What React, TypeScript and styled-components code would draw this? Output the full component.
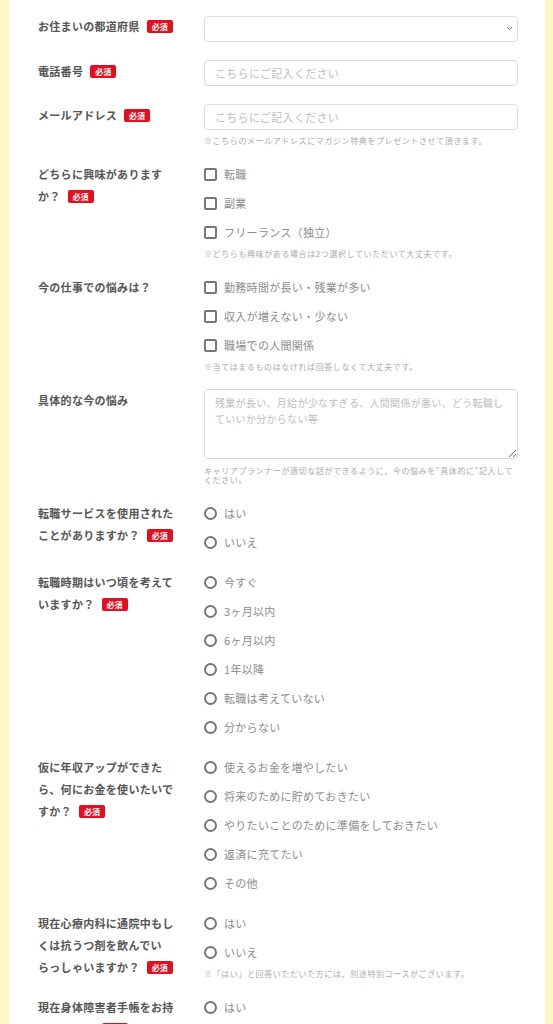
import { createGlobalStyle } from 'styled-components';
import styled from 'styled-components';
import { ChevronDown } from 'lucide-react';

const GlobalStyle = createGlobalStyle`
  html, body {
    margin: 0;
    padding: 0;
    background: #fdf7c6;
  }
  body {
    font-family: "Noto Sans CJK JP", "Noto Sans", sans-serif;
  }
  * {
    box-sizing: border-box;
  }
`;

const Page = styled.div`
  padding: 0 8px 0 9px;
`;

const Form = styled.form`
  background: #fff;
  padding: 15px 27px 40px 29px;
  display: flex;
  flex-direction: column;
  gap: 18px;
`;

const Row = styled.div`
  display: grid;
  grid-template-columns: 166px 1fr;
`;

const Label = styled.div`
  font-size: 11px;
  letter-spacing: 0.3px;
  font-weight: 700;
  color: #555;
  line-height: 22px;
  padding-right: 24px;
  line-break: strict;
`;

const Badge = styled.span`
  display: inline-block;
  margin-left: 7px;
  padding: 0 5px;
  height: 13px;
  line-height: 13px;
  border-radius: 2px;
  background: #e50e1f;
  color: #fff;
  font-size: 8px;
  font-weight: 700;
  letter-spacing: 0;
  vertical-align: 1px;
`;

const Field = styled.div`
  display: flex;
  flex-direction: column;
  min-width: 0;
`;

const baseInput = `
  width: 100%;
  border: 1px solid #dcdcdc;
  border-radius: 4px;
  background: #fff;
  font-family: "Noto Sans CJK JP", "Noto Sans", sans-serif;
  font-size: 11px;
  letter-spacing: 0.3px;
  color: #555;
  outline: none;
  &::placeholder {
    color: #bdbdbd;
  }
`;

const TextInput = styled.input`
  ${baseInput}
  height: 26px;
  padding: 0 10px;
`;

const SelectWrap = styled.div`
  position: relative;
`;

const Select = styled.select`
  ${baseInput}
  appearance: none;
  height: 26px;
  padding: 0 10px;
`;

const Chevron = styled(ChevronDown)`
  position: absolute;
  right: 4px;
  top: 9px;
  color: #666;
  pointer-events: none;
`;

const TextArea = styled.textarea`
  ${baseInput}
  display: block;
  height: 70px;
  margin-bottom: 1px;
  padding: 5px 10px;
  font-size: 10px;
  line-height: 16px;
  resize: vertical;
`;

const Note = styled.p`
  margin: 6px 0 0;
  font-size: 8px;
  letter-spacing: 0.6px;
  line-height: 9px;
  color: #aaa;
`;

const OptionList = styled.div`
  display: flex;
  flex-direction: column;
  gap: 7px;
`;

const Option = styled.label`
  display: flex;
  align-items: center;
  gap: 7px;
  height: 22px;
  font-size: 11px;
  letter-spacing: 0.3px;
  color: #8c8c8c;
`;

const Mark = styled.span<{ $round?: boolean }>`
  flex: none;
  width: 13px;
  height: 13px;
  border: 2px solid #777;
  border-radius: ${(p) => (p.$round ? '50%' : '2px')};
  background: #fff;
`;

type Question = {
  label: string;
  required?: boolean;
  kind: 'select' | 'text' | 'textarea' | 'check' | 'radio';
  options?: string[];
  placeholder?: string;
  note?: string;
};

const questions: Question[] = [
  { label: 'お住まいの都道府県', required: true, kind: 'select' },
  { label: '電話番号', required: true, kind: 'text', placeholder: 'こちらにご記入ください' },
  {
    label: 'メールアドレス',
    required: true,
    kind: 'text',
    placeholder: 'こちらにご記入ください',
    note: '※こちらのメールアドレスにマガジン特典をプレゼントさせて頂きます。',
  },
  {
    label: 'どちらに興味がありますか？',
    required: true,
    kind: 'check',
    options: ['転職', '副業', 'フリーランス（独立）'],
    note: '※どちらも興味がある場合は2つ選択していただいて大丈夫です。',
  },
  {
    label: '今の仕事での悩みは？',
    kind: 'check',
    options: ['勤務時間が長い・残業が多い', '収入が増えない・少ない', '職場での人間関係'],
    note: '※当てはまるものはなければ回答しなくて大丈夫です。',
  },
  {
    label: '具体的な今の悩み',
    kind: 'textarea',
    placeholder: '残業が長い、月給が少なすぎる、人間関係が悪い、どう転職していいか分からない等',
    note: 'キャリアプランナーが適切な話ができるように、今の悩みを"具体的に"記入してください。',
  },
  {
    label: '転職サービスを使用されたことがありますか？',
    required: true,
    kind: 'radio',
    options: ['はい', 'いいえ'],
  },
  {
    label: '転職時期はいつ頃を考えていますか？',
    required: true,
    kind: 'radio',
    options: ['今すぐ', '3ヶ月以内', '6ヶ月以内', '1年以降', '転職は考えていない', '分からない'],
  },
  {
    label: '仮に年収アップができたら、何にお金を使いたいですか？',
    required: true,
    kind: 'radio',
    options: [
      '使えるお金を増やしたい',
      '将来のために貯めておきたい',
      'やりたいことのために準備をしておきたい',
      '返済に充てたい',
      'その他',
    ],
  },
  {
    label: '現在心療内科に通院中もしくは抗うつ剤を飲んでいらっしゃいますか？',
    required: true,
    kind: 'radio',
    options: ['はい', 'いいえ'],
    note: '※「はい」と回答いただいた方には、別途特別コースがございます。',
  },
  {
    label: '現在身体障害者手帳をお持ちですか？',
    required: true,
    kind: 'radio',
    options: ['はい', 'いいえ'],
  },
];

const Control = ({ q }: { q: Question }) => {
  switch (q.kind) {
    case 'select':
      return (
        <SelectWrap>
          <Select defaultValue="">
            <option value=""></option>
          </Select>
          <Chevron size={9} strokeWidth={2.5} />
        </SelectWrap>
      );
    case 'text':
      return <TextInput placeholder={q.placeholder} />;
    case 'textarea':
      return <TextArea placeholder={q.placeholder} />;
    default:
      return (
        <OptionList>
          {q.options?.map((o) => (
            <Option key={o}>
              <Mark $round={q.kind === 'radio'} />
              {o}
            </Option>
          ))}
        </OptionList>
      );
  }
};

export default function App() {
  return (
    <>
      <GlobalStyle />
      <Page lang="ja">
        <Form onSubmit={(e) => e.preventDefault()}>
          {questions.map((q) => (
            <Row key={q.label}>
              <Label>
                {q.label}
                {q.required && <Badge>必須</Badge>}
              </Label>
              <Field>
                <Control q={q} />
                {q.note && <Note>{q.note}</Note>}
              </Field>
            </Row>
          ))}
        </Form>
      </Page>
    </>
  );
}
